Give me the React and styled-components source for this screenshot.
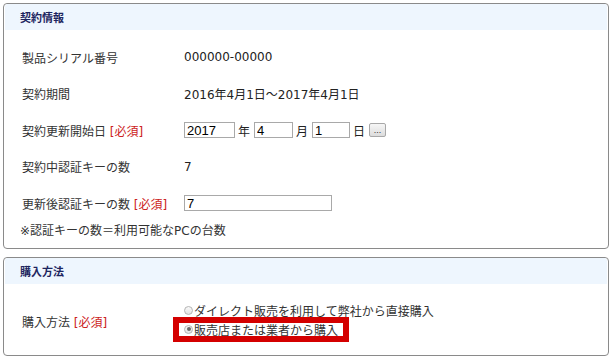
import styled, { createGlobalStyle } from "styled-components"

const GlobalStyle = createGlobalStyle`
  body {
    margin: 0;
    background: #fff;
    font-family: "DejaVu Sans", "Noto Sans CJK JP", sans-serif;
    font-size: 12px;
    color: #333;
  }
`

const Page = styled.div`
  width: 606px;
  padding: 3px;
`

// パネル
const Panel = styled.section`
  border: 1px solid #8a8a8a;
  border-radius: 4px;
  padding: 0 1px;

  & + & {
    margin-top: 8px;
  }
`

const PanelHeader = styled.h2`
  margin: 0;
  height: 26px;
  display: flex;
  align-items: center;
  padding-left: 15px;
  background: #eef6fe;
  border-radius: 3px 3px 0 0;
  font-family: "Noto Sans CJK JP", sans-serif;
  font-size: 11px;
  font-weight: bold;
  color: #1d2560;
`

const PanelBody = styled.div`
  padding: ${props => props.$pad || "9px 0 8px 17px"};
`

const Row = styled.div`
  display: grid;
  grid-template-columns: 162px 1fr;
  align-items: center;
  height: ${props => props.$h || "36.5px"};
`

const Label = styled.div`
  white-space: nowrap;
`

const Required = styled.span`
  color: #cc2222;
`

const Value = styled.div`
  display: flex;
  align-items: center;
  color: #222;
`

const Input = styled.input`
  box-sizing: border-box;
  width: ${props => props.$w}px;
  height: 16px;
  padding: 0 2px;
  margin: 0;
  border: 1px solid #a9a9a9;
  font-family: "Liberation Sans", Arial, sans-serif;
  font-size: 13px;
  color: #000;
  outline: none;
`

const Unit = styled.span`
  margin: 0 4px 0 3px;
`

const PickerButton = styled.button`
  box-sizing: border-box;
  width: 17px;
  height: 14px;
  margin-left: 0;
  padding: 0;
  border: 1px solid #a8a8a8;
  border-radius: 2px;
  background: linear-gradient(#f6f6f6, #dcdcdc);
  font-family: "Liberation Sans", Arial, sans-serif;
  font-size: 9px;
  line-height: 8px;
  color: #333;
`

const Note = styled.div`
  height: 18px;
  line-height: 18px;
  margin-left: -2px;
`

// ラジオボタン
const Options = styled.div`
  display: flex;
  flex-direction: column;
  padding-bottom: 6px;
`

const Option = styled.label`
  display: flex;
  align-items: center;
  height: ${props => props.$highlight ? "13px" : "18px"};
  margin: ${props => props.$highlight ? "3px 0 0 -5px" : "0"};
  padding: ${props => props.$highlight ? "0 5px" : "0"};
  align-self: flex-start;
  outline: ${props => props.$highlight ? "6px solid #d40000" : "none"};
  color: #333;
`

const Radio = styled.span`
  position: relative;
  box-sizing: border-box;
  width: 9px;
  height: 9px;
  margin-right: 1px;
  border-radius: 50%;
  border: 1px solid #b4b4b4;
  background: linear-gradient(#fafafa, #e2e2e2);

  &::after {
    content: "";
    display: ${props => props.$checked ? "block" : "none"};
    position: absolute;
    left: 1.5px;
    top: 1.5px;
    width: 4px;
    height: 4px;
    border-radius: 50%;
    background: #6a6a6a;
  }
`

const App = () => {
  return (
    <Page>
      <GlobalStyle />
      <Panel>
        <PanelHeader>契約情報</PanelHeader>
        <PanelBody>
          <Row>
            <Label>製品シリアル番号</Label>
            <Value>000000-00000</Value>
          </Row>
          <Row>
            <Label>契約期間</Label>
            <Value>2016年4月1日～2017年4月1日</Value>
          </Row>
          <Row>
            <Label>契約更新開始日 <Required>[必須]</Required></Label>
            <Value>
              <Input $w={51} defaultValue="2017" />
              <Unit>年</Unit>
              <Input $w={39} defaultValue="4" />
              <Unit>月</Unit>
              <Input $w={38} defaultValue="1" />
              <Unit>日</Unit>
              <PickerButton>...</PickerButton>
            </Value>
          </Row>
          <Row>
            <Label>契約中認証キーの数</Label>
            <Value>7</Value>
          </Row>
          <Row>
            <Label>更新後認証キーの数 <Required>[必須]</Required></Label>
            <Value>
              <Input $w={148} defaultValue="7" />
            </Value>
          </Row>
          <Note>※認証キーの数＝利用可能なPCの台数</Note>
        </PanelBody>
      </Panel>
      <Panel>
        <PanelHeader>購入方法</PanelHeader>
        <PanelBody $pad="18px 0 13px 17px">
          <Row $h="auto">
            <Label>購入方法 <Required>[必須]</Required></Label>
            <Options>
              <Option>
                <Radio />ダイレクト販売を利用して弊社から直接購入
              </Option>
              <Option $highlight>
                <Radio $checked />販売店または業者から購入
              </Option>
            </Options>
          </Row>
        </PanelBody>
      </Panel>
    </Page>
  )
}

export default App
